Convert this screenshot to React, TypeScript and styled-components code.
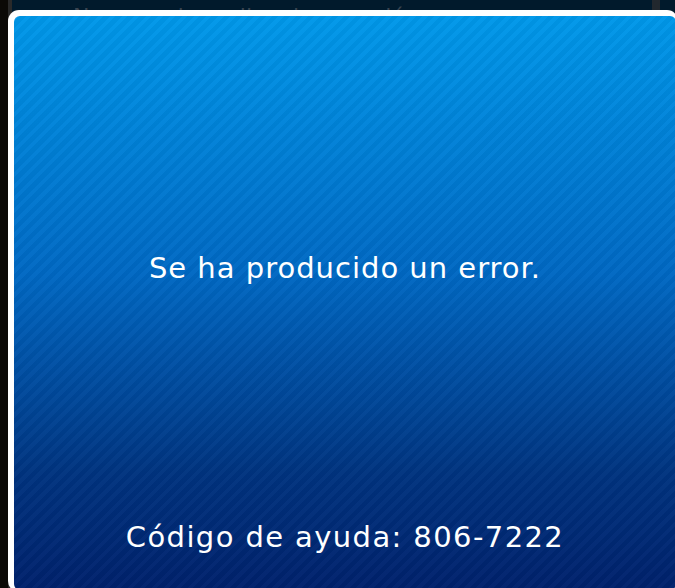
import React from "react";
import styled, { createGlobalStyle } from "styled-components";

const Global = createGlobalStyle`
  html, body { margin: 0; padding: 0; background: #0b0906; }
  body { width: 675px; height: 588px; overflow: hidden; }
  #root { width: 675px; height: 588px; }
`;

const Page = styled.div`
  position: relative;
  width: 675px;
  height: 588px;
  display: flex;
  overflow: hidden;
  background: #0b0906;
`;

const LeftEdge = styled.div`
  width: 8px;
  flex: none;
  background: #0b0906;
`;

const Divider = styled.div`
  width: 4px;
  flex: none;
  background: #2a2a2a;
`;

const Main = styled.div`
  flex: 1;
  display: flex;
  background: #011a2c;
`;

const Content = styled.div`
  flex: 1;
  padding: 4px 0 0 61px;
  font-family: "DejaVu Sans", sans-serif;
  font-size: 22px;
  color: #3a4450;
  white-space: nowrap;
  overflow: hidden;
`;

const ScrollTrack = styled.div`
  width: 8px;
  flex: none;
  background: #22282e;
`;

const Gutter = styled.div`
  width: 15px;
  flex: none;
  background: #011a2c;
`;

const Modal = styled.div`
  position: absolute;
  left: 8px;
  top: 10px;
  width: 670px;
  height: 582px;
  box-sizing: border-box;
  padding: 6px 2px 2px 6px;
  background: #ffffff;
  border-radius: 11px;
  display: flex;
`;

const Panel = styled.div`
  flex: 1;
  border-radius: 6px;
  display: flex;
  flex-direction: column;
  align-items: center;
  font-family: "DejaVu Sans", sans-serif;
  color: #ffffff;
  background:
    repeating-linear-gradient(
      135deg,
      rgba(255, 255, 255, 0.02) 0px,
      rgba(255, 255, 255, 0.02) 4px,
      rgba(0, 0, 0, 0.035) 4px,
      rgba(0, 0, 0, 0.035) 8.5px
    ),
    linear-gradient(180deg, #0098ea 0%, #0068c3 45%, #00337f 80%, #00216c 100%);
`;

const Message = styled.div`
  margin-top: 235px;
  font-size: 29px;
  line-height: 34px;
  letter-spacing: 1px;
`;

const Spacer = styled.div`
  flex: 1;
`;

const HelpCode = styled.div`
  margin-bottom: 36px;
  font-size: 29px;
  line-height: 34px;
  letter-spacing: 1.4px;
`;

export default function App() {
  return (
    <>
      <Global />
      <Page>
        <LeftEdge />
        <Divider />
        <Main>
          <Content>No se pudo realizar la conexión.</Content>
          <ScrollTrack />
          <Gutter />
        </Main>
        <Modal>
          <Panel>
            <Message>Se ha producido un error.</Message>
            <Spacer />
            <HelpCode>Código de ayuda: 806-7222</HelpCode>
          </Panel>
        </Modal>
      </Page>
    </>
  );
}
